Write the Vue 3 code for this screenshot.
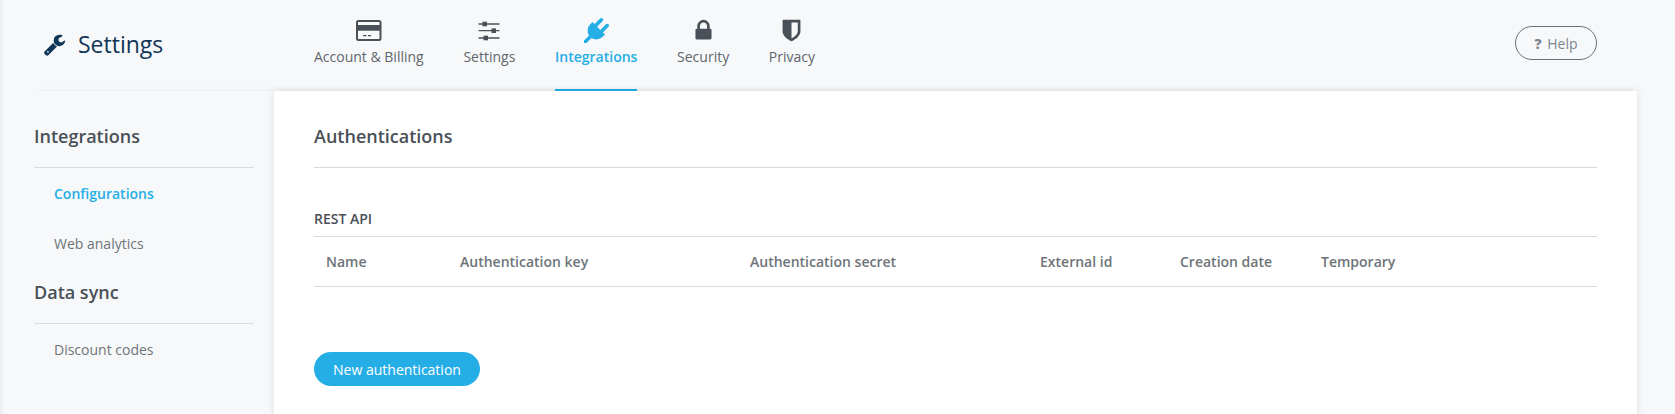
<script setup>
const tabs = [
  { label: 'Account & Billing', icon: 'card' },
  { label: 'Settings', icon: 'sliders' },
  { label: 'Integrations', icon: 'plug', active: true },
  { label: 'Security', icon: 'lock' },
  { label: 'Privacy', icon: 'shield' },
]
const columns = ['Name', 'Authentication key', 'Authentication secret', 'External id', 'Creation date', 'Temporary']
</script>

<template>
  <div class="page">
    <header class="topbar">
      <div class="brand">
        <svg class="wrench" viewBox="0 0 1792 1792" width="23" height="23">
          <path fill="#0f3557" d="M448 1472q0-26-19-45t-45-19-45 19-19 45 19 45 45 19 45-19 19-45zm644-420l-682 682q-37 37-90 37-52 0-91-37l-106-108q-38-36-38-90 0-53 38-91l681-681q39 98 114.500 173.500t173.500 114.500zm634-435q0 39-23 106-47 134-164.500 217.500t-258.500 83.500q-185 0-316.500-131.500t-131.500-316.500 131.500-316.500 316.500-131.500q58 0 121.500 16.500t107.500 46.500q16 11 16 28t-16 28l-293 169v224l193 107q5-3 79-48.500t135.500-81 70.500-35.500q15 0 23.500 10t8.500 25z"/>
        </svg>
        <span class="brand-text">Settings</span>
      </div>
      <nav class="tabs">
        <a v-for="tab in tabs" :key="tab.label" class="tab" :class="{ active: tab.active }">
          <span class="icon-box">
            <svg v-if="tab.icon === 'card'" viewBox="0 0 28 24" width="28" height="24">
              <rect x="2" y="3" width="23.500" height="19" rx="1.500" fill="none" stroke="currentColor" stroke-width="2"/>
              <rect x="2" y="7" width="23.500" height="5.700" fill="currentColor"/>
              <path d="M8 17.700h3.500M13 17.700h3" stroke="currentColor" stroke-width="1.200"/>
            </svg>
            <svg v-else-if="tab.icon === 'sliders'" viewBox="0 0 24 24" width="24" height="24">
              <path d="M1.500 6h21M1.500 12.700h21M1.500 20h21" stroke="currentColor" stroke-width="1.300"/>
              <rect x="5.500" y="3.700" width="4.500" height="4.600" fill="currentColor"/>
              <rect x="14.500" y="10.400" width="4.500" height="4.600" fill="currentColor"/>
              <rect x="6.500" y="17.700" width="4.500" height="4.600" fill="currentColor"/>
            </svg>
            <svg v-else-if="tab.icon === 'plug'" viewBox="0 0 1792 1792" width="25" height="25">
              <path fill="currentColor" d="M1755 453q37 38 37 90.500t-37 90.500l-401 400 150 150-160 160q-163 163-389.500 186.500t-411.500-100.500l-362 362h-181v-181l362-362q-124-185-100.500-411.500t186.500-389.500l160-160 150 150 400-401q38-37 91-37t90 37 37 90.500-37 90.500l-400 401 234 234 401-400q38-37 91-37t90 37z"/>
            </svg>
            <svg v-else-if="tab.icon === 'lock'" viewBox="0 0 1792 1792" width="25" height="25">
              <path fill="currentColor" d="M640 768h512v-192q0-106-75-181t-181-75-181 75-75 181v192zm832 96v576q0 40-28 68t-68 28h-960q-40 0-68-28t-28-68v-576q0-40 28-68t68-28h32v-192q0-184 132-316t316-132 316 132 132 316v192h32q40 0 68 28t28 68z"/>
            </svg>
            <svg v-else viewBox="0 0 1792 1792" width="25" height="25">
              <path fill="currentColor" d="M1344 960v-640h-448v1137q119-63 213-137 235-184 235-360zm192-768v768q0 86-33.500 170.500t-83 150-118 127.500-126.500 103-121 77.500-89.500 49.500-42.500 20q-12 6-26 6t-26-6q-16-7-42.500-20t-89.500-49.500-121-77.500-126.500-103-118-127.500-83-150-33.500-170.500v-768q0-26 19-45t45-19h1152q26 0 45 19t19 45z"/>
            </svg>
          </span>
          <span>{{ tab.label }}</span>
        </a>
      </nav>
      <button class="help"><b>?</b> Help</button>
    </header>

    <div class="body">
      <aside class="side">
        <h3 class="side-title">Integrations</h3>
        <ul class="side-list">
          <li class="side-item current">Configurations</li>
          <li class="side-item">Web analytics</li>
        </ul>
        <h3 class="side-title second">Data sync</h3>
        <ul class="side-list">
          <li class="side-item">Discount codes</li>
        </ul>
      </aside>

      <main class="panel">
        <h2 class="panel-title">Authentications</h2>
        <h4 class="section-title">REST API</h4>
        <div class="table-head">
          <span v-for="col in columns" :key="col">{{ col }}</span>
        </div>
        <button class="primary">New authentication</button>
      </main>
    </div>
  </div>
</template>

<style>
html, body { margin: 0; height: 100%; overflow: hidden; background: #f7f8fa; }
</style>

<style scoped>
.page {
  height: 414px;
  overflow: hidden;
  background: #f7f8fa;
  font-family: "Open Sans", sans-serif;
  color: #495057;
  box-shadow: inset 4px 0 4px -3px rgba(0, 0, 0, 0.07);
}
.topbar {
  height: 91px;
  display: flex;
  align-items: flex-start;
  padding-left: 43px;
}
.brand {
  width: 271px;
  display: flex;
  align-items: center;
  gap: 12px;
  height: 88px;
}
.wrench { flex-shrink: 0; }
.brand-text { font-size: 23px; color: #0f3557; }
.tabs {
  display: flex;
  gap: 39.7px;
  height: 91px;
}
.tab {
  display: flex;
  flex-direction: column;
  align-items: center;
  box-sizing: border-box;
  height: 91px;
  padding-top: 18px;
  font-size: 14px;
  color: #5f666c;
  border-bottom: 2px solid transparent;
  cursor: pointer;
}
.icon-box {
  height: 24px;
  margin-bottom: 5px;
  display: flex;
  align-items: center;
  justify-content: center;
  color: #495057;
}
.icon-box svg { flex-shrink: 0; display: block; }
.tab.active { color: #25aee6; border-bottom-color: #25aee6; font-weight: 600; }
.tab.active .icon-box { color: #25aee6; }
.help {
  margin-left: auto;
  margin-right: 78px;
  margin-top: 26px;
  width: 82px;
  height: 34px;
  border: 1px solid #68737d;
  border-radius: 17px;
  background: transparent;
  font-family: inherit;
  font-size: 14px;
  color: #7c858d;
}
.help b { font-weight: 800; font-size: 14px; margin-right: 2px; }
.body {
  display: flex;
  align-items: flex-start;
  height: 323px;
  margin: 0 38px 0 34px;
  box-shadow: 0 -5px 6px -5px rgba(0, 0, 0, 0.07);
}
.side {
  width: 220px;
  margin-right: 20px;
  padding-top: 33px;
}
.side-title {
  margin: 0;
  font-size: 18px;
  font-weight: 600;
  color: #495057;
  line-height: 24px;
  padding-bottom: 19px;
  border-bottom: 1px solid #d8dbde;
}
.side-title.second { margin-top: 11px; }
.side-list { list-style: none; margin: 0; padding: 1px 0 0 20px; }
.side-item {
  font-size: 14px;
  line-height: 50px;
  color: #6d7479;
}
.side-item.current { color: #25aee6; font-weight: 600; }
.panel {
  flex: 1;
  height: 400px;
  padding: 33px 40px 0;
  background: #fff;
  box-shadow: 0 0 8px rgba(0, 0, 0, 0.1);
}
.panel-title {
  margin: 0;
  font-size: 18px;
  font-weight: 600;
  color: #495057;
  line-height: 24px;
  padding-bottom: 19px;
  border-bottom: 1px solid #d8dbde;
}
.section-title {
  margin: 0;
  height: 69px;
  box-sizing: border-box;
  padding-top: 41px;
  line-height: 20px;
  font-size: 14px;
  font-weight: 600;
  color: #495057;
  border-bottom: 1px solid #d8dbde;
}
.table-head {
  display: grid;
  grid-template-columns: 134px 290px 290px 140px 141px 1fr;
  padding-left: 12px;
  height: 50px;
  line-height: 49px;
  box-sizing: border-box;
  border-bottom: 1px solid #d8dbde;
  font-size: 14px;
  font-weight: 600;
  color: #6d7479;
}
.primary {
  display: block;
  margin-top: 65px;
  width: 166px;
  height: 34px;
  border: 0;
  border-radius: 17px;
  background: #25aee6;
  color: #fff;
  font-family: inherit;
  font-size: 14px;
  font-weight: 400;
}
</style>
